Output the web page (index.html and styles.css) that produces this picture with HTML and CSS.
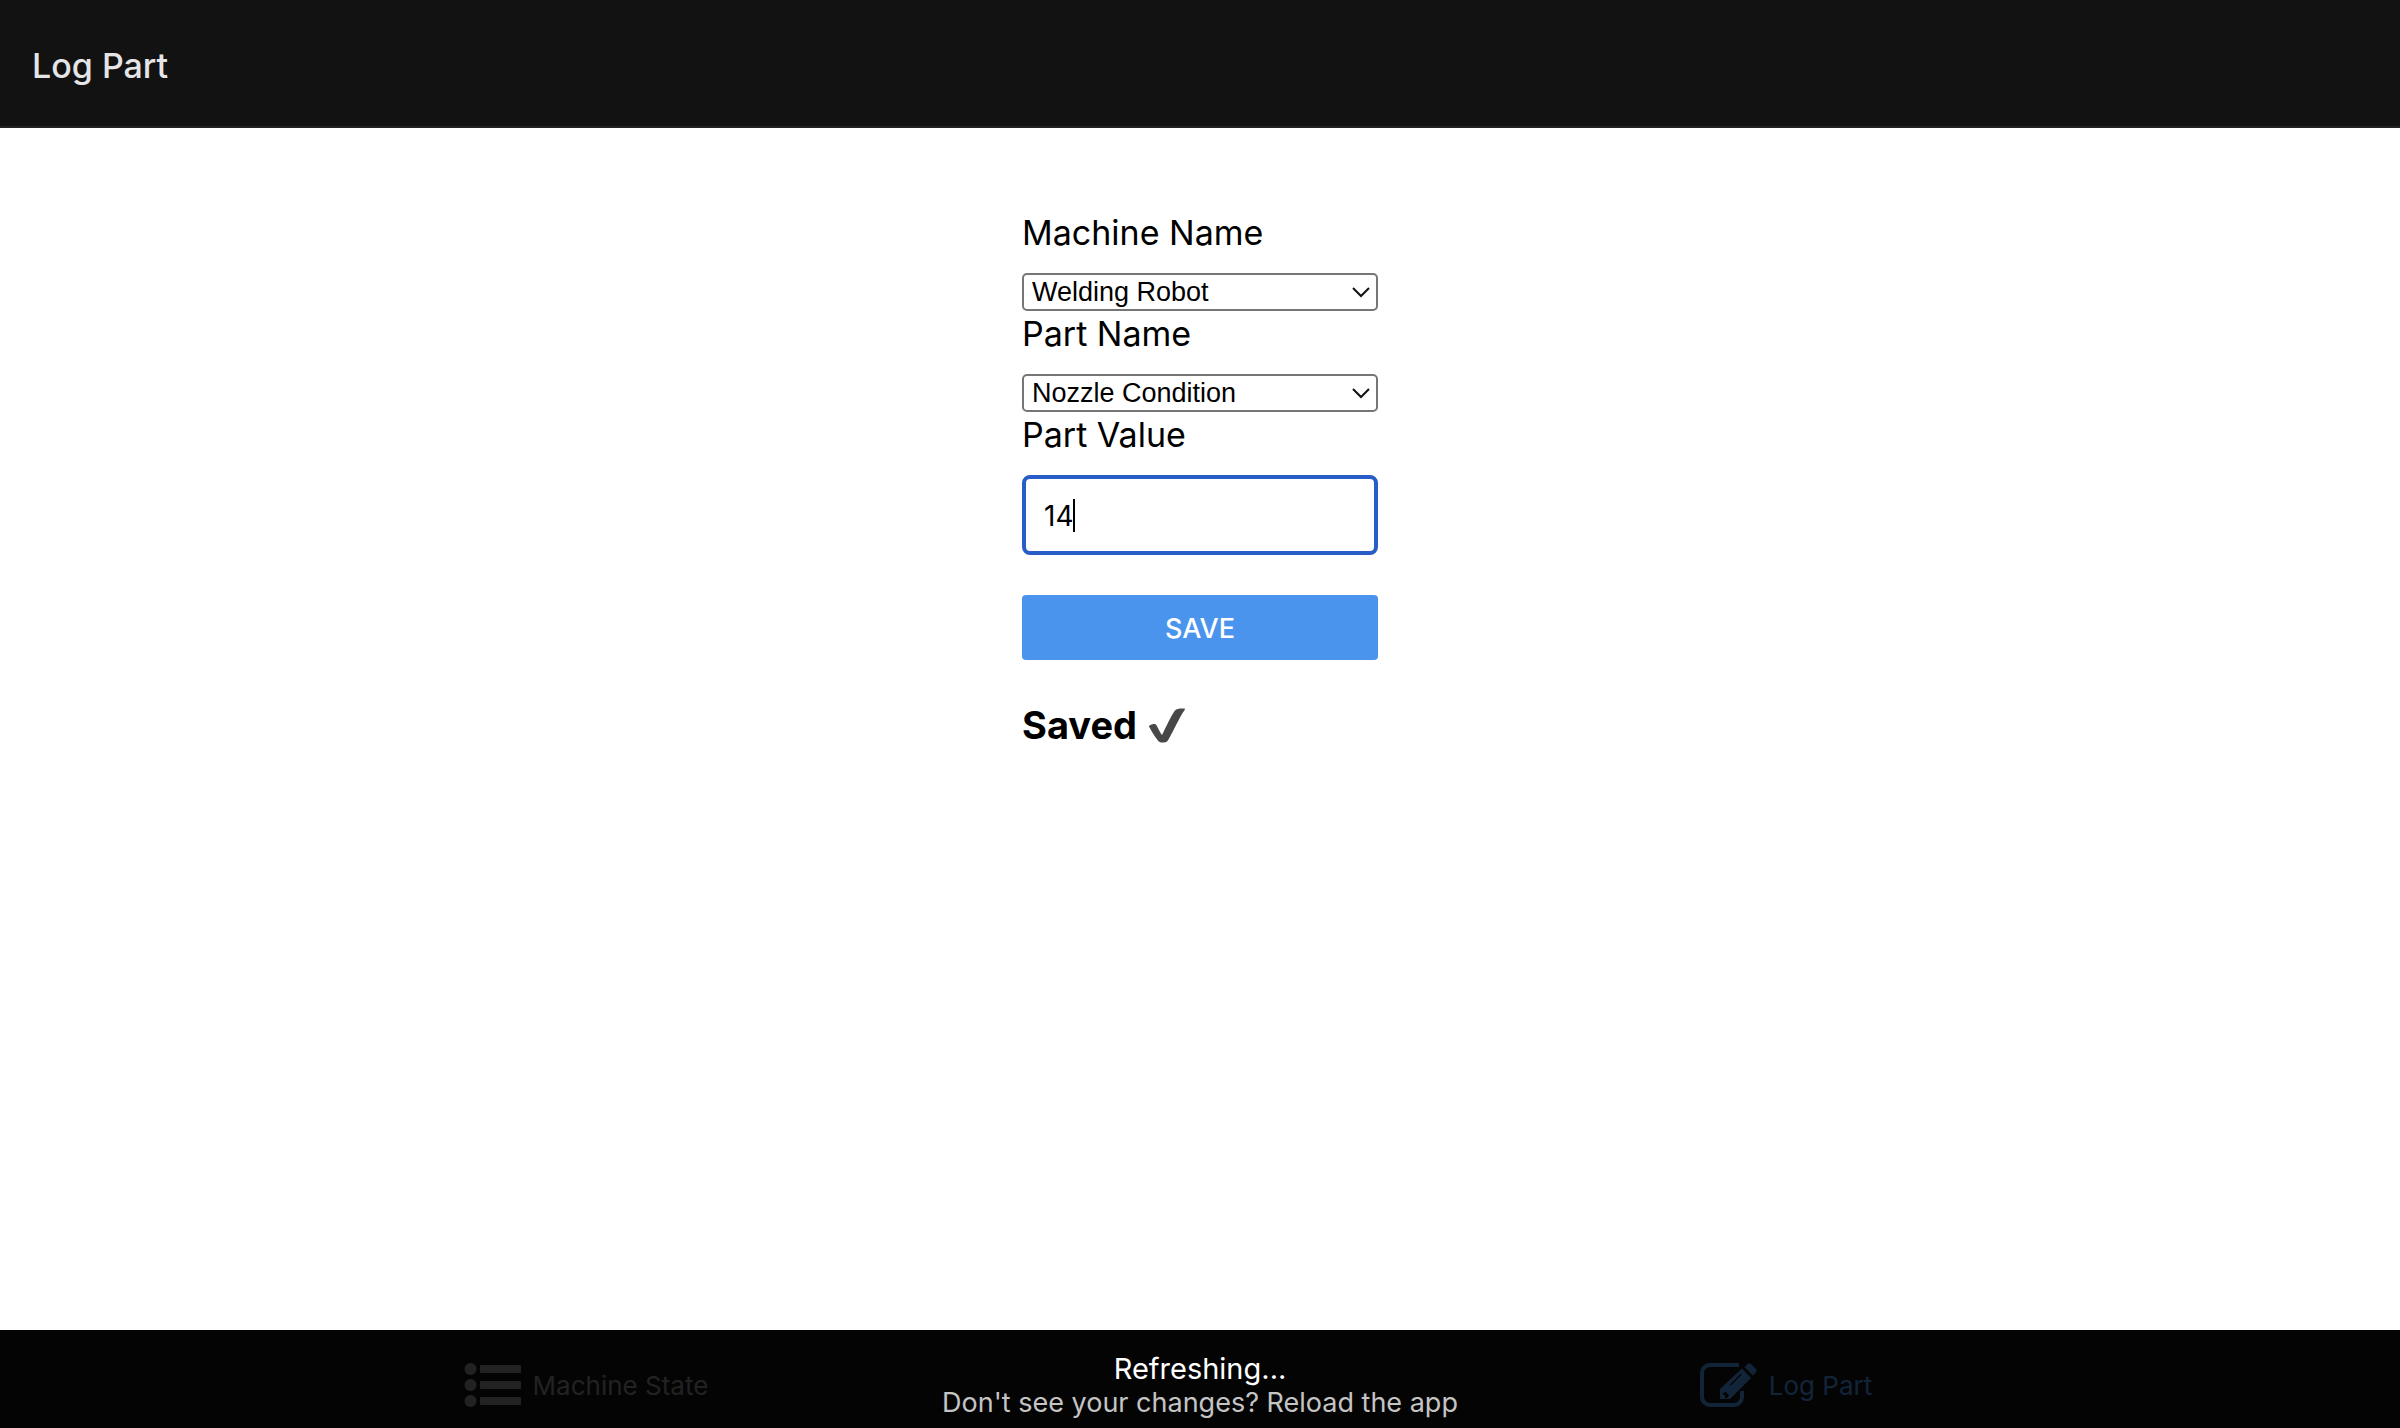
FILE: index.html
```html
<!DOCTYPE html>
<html lang="en">
<head>
<meta charset="utf-8">
<meta name="viewport" content="width=device-width, initial-scale=1">
<title>Log Part</title>
<link rel="stylesheet" href="styles.css">
</head>
<body>
<header class="header"><h1 class="title">Log Part</h1></header>
<main class="content">
  <form class="form">
    <label class="label" for="machine">Machine Name</label>
    <div class="picker">
      <select class="select" id="machine"><option>Welding Robot</option></select>
      <svg class="chevron" viewBox="0 0 18 12" aria-hidden="true"><path d="M1 2l8 8 8-8"/></svg>
    </div>
    <label class="label" for="part">Part Name</label>
    <div class="picker">
      <select class="select" id="part"><option>Nozzle Condition</option></select>
      <svg class="chevron" viewBox="0 0 18 12" aria-hidden="true"><path d="M1 2l8 8 8-8"/></svg>
    </div>
    <label class="label" for="value">Part Value</label>
    <div class="field">
      <input class="input" id="value" type="text" value="14">
      <span class="caret" aria-hidden="true"></span>
    </div>
    <button class="save" type="button">SAVE</button>
    <h2 class="status">Saved
      <svg class="check" viewBox="0 0 36 35" aria-label="done"><path d="M0 18.500C0 17 4.500 15.500 6.500 16.200C8 17 9.500 22 13 27C17 19 22 8 26 2.500C27.500.500 32 .200 35.500.500C36.200.600 36 1.500 35.500 2.300C30 10 24.500 23 19.500 31.500C18 34.200 16.500 34.500 13.500 34.500C11 34.500 10 34 8.500 32C5 27.500 2 22 0 18.500Z"/></svg>
    </h2>
  </form>
</main>
<footer class="footer">
  <nav class="tabs">
    <a class="tab" href="#state">
      <svg class="tab-icon" viewBox="0 0 57 44" aria-hidden="true"><circle cx="6.500" cy="6" r="6"/><circle cx="6.500" cy="22" r="6"/><circle cx="6.500" cy="38" r="6"/><rect x="16" y="2" width="41" height="8" rx="1"/><rect x="16" y="18" width="41" height="8" rx="1"/><rect x="16" y="34" width="41" height="8" rx="1"/></svg>
      Machine State
    </a>
    <a class="tab tab-active" href="#log">
      <svg class="tab-icon" viewBox="0 0 57 44" aria-hidden="true"><path class="outline" d="M39 2H10a8 8 0 0 0-8 8v24a8 8 0 0 0 8 8h24a8 8 0 0 0 8-8v-6"/><path fill-rule="evenodd" d="M42 5.500l9 9.500-21 21H20V26ZM30 21.500l1 1 11-11-1-1ZM23 30.500v1.500h2v3h2l2-2.500-3.500-4Z"/><path d="M44.500 4l2.800-2.700q2-1.600 4 0l4.400 4.400q1.600 2 0 4l-2.700 2.800Z"/></svg>
      Log Part
    </a>
  </nav>
  <div class="refresh" role="status">
    <span>Refreshing...</span>
    <span class="hint">Don't see your changes? Reload the app</span>
  </div>
</footer>
</body>
</html>
```
FILE: styles.css
```css
* { box-sizing: border-box; }
body {
  margin: 0;
  min-height: 100vh;
  display: flex;
  flex-direction: column;
  background: #fff;
  color: #000;
  font-family: Inter, "Liberation Sans", sans-serif;
}
.header {
  height: 128px;
  padding: 6px 32px 0;
  display: flex;
  align-items: center;
  background: #121212;
  border-bottom: 2px solid #222;
}
.title {
  margin: 0;
  font-size: 34px;
  font-weight: 500;
  line-height: 48px;
  color: #e5e5e7;
}
.content {
  flex: 1;
  display: flex;
  justify-content: center;
  align-items: flex-start;
  padding: 82px 24px;
}
.form {
  width: 356px;
  display: flex;
  flex-direction: column;
}
.label {
  padding-bottom: 17px;
  font-size: 34px;
  line-height: 46px;
}
.picker, .field { position: relative; display: flex; }
.select {
  appearance: none;
  width: 100%;
  height: 38px;
  padding: 0 8px;
  border: 2px solid #767676;
  border-radius: 5px;
  background: #fff;
  color: #000;
  font: 27px/34px "Liberation Sans", Arial, sans-serif;
}
.chevron {
  position: absolute;
  top: 13px;
  right: 8px;
  width: 18px;
  height: 12px;
  fill: none;
  stroke: #111;
  stroke-width: 2;
  pointer-events: none;
}
.input {
  width: 100%;
  height: 80px;
  padding: 2px 18px 0;
  border: 4px solid #285dc8;
  border-radius: 8px;
  outline: none;
  background: #fff;
  color: #000;
  font: 28px/36px Inter, sans-serif;
}
.caret {
  position: absolute;
  top: 24px;
  left: 51px;
  width: 2px;
  height: 33px;
  background: #000;
}
.save {
  height: 65px;
  margin: 40px 0 38px;
  padding: 2px 0 0;
  border: 0;
  border-radius: 4px;
  background: #4a94ed;
  color: #fff;
  font: 500 27px/36px Inter, sans-serif;
}
.status {
  margin: 0;
  display: flex;
  align-items: center;
  gap: 12px;
  font-size: 38px;
  font-weight: 700;
  line-height: 54px;
}
.check { width: 36px; height: 35px; fill: #484848; }
.footer {
  position: relative;
  background: #121212;
}
.tabs { display: flex; height: 98px; padding-top: 12px; }
.tab {
  flex: 1;
  display: flex;
  justify-content: center;
  align-items: center;
  gap: 12px;
  padding-right: 28px;
  color: #868688;
  font-size: 26px;
  text-decoration: none;
}
.tab-active { color: #4a90e0; }
.tab-icon { width: 57px; height: 44px; fill: currentColor; }
.outline { fill: none; stroke: currentColor; stroke-width: 4; }
.refresh {
  position: absolute;
  inset: 0;
  display: flex;
  flex-direction: column;
  align-items: center;
  padding-top: 22px;
  background: rgba(0, 0, 0, 0.75);
  color: #fff;
  font-size: 29px;
  line-height: 34px;
}
.hint { color: #c4c4c4; font-size: 27px; }
```
